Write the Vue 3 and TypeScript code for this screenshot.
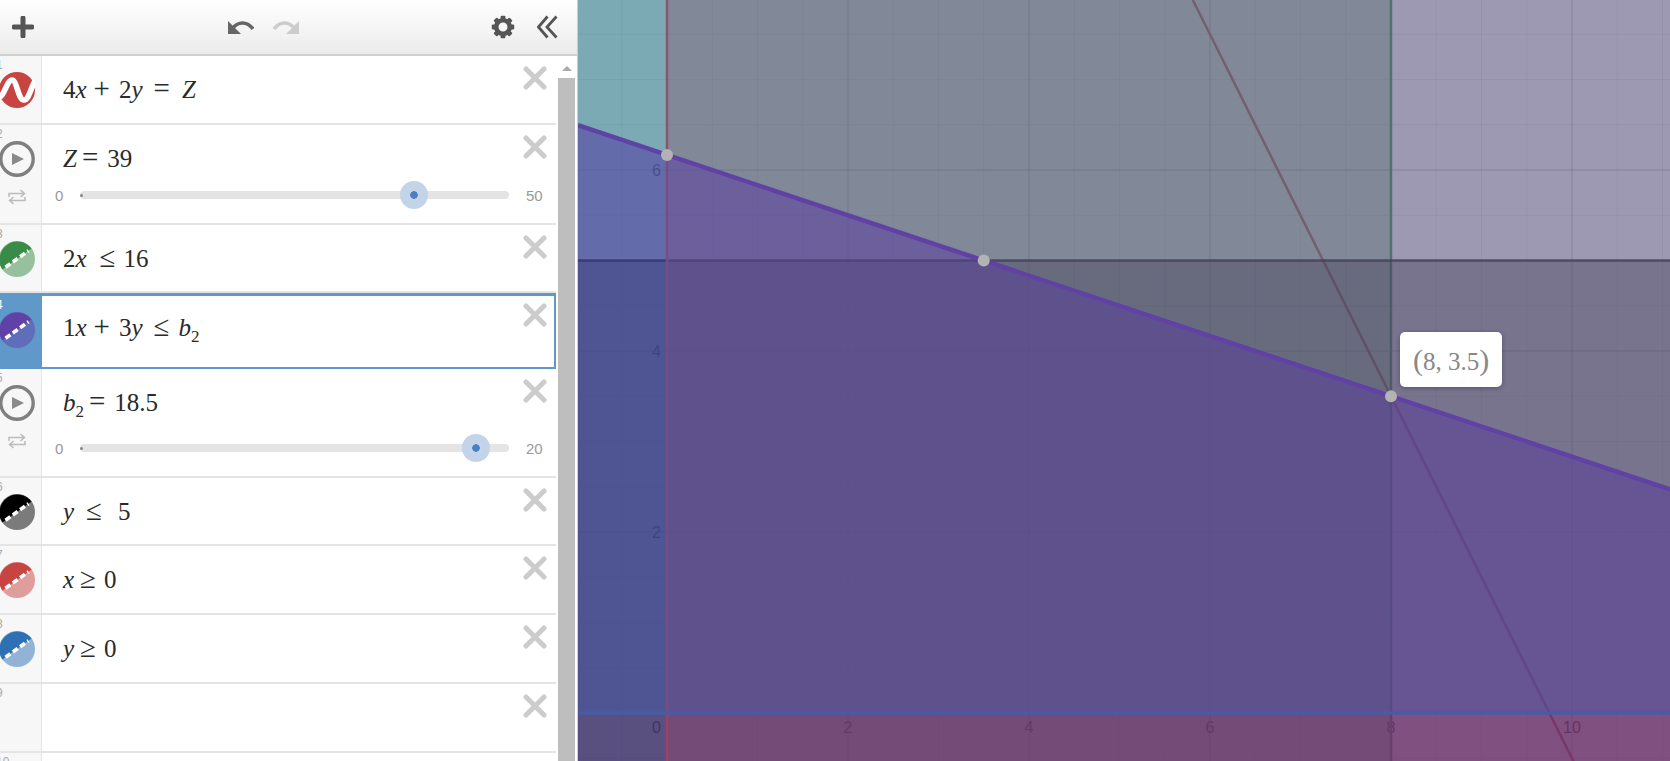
<template>
  <div class="app">
    <aside class="panel">
      <header class="toolbar">
        <svg class="plus" width="22" height="22" viewBox="0 0 22 22">
          <path d="M11 2v18M2 11h18" stroke="#555" stroke-width="5" stroke-linecap="round" />
        </svg>
        <svg class="undo" width="26" height="15" viewBox="0 0 26 15">
          <path d="M0 1 L0 14 L13 14 Z" fill="#666" />
          <path d="M4 9 C10 1 19 1 25 9" fill="none" stroke="#666" stroke-width="3.6" />
        </svg>
        <svg class="redo" width="26" height="15" viewBox="0 0 26 15">
          <path d="M26 1 L26 14 L13 14 Z" fill="#ccc" />
          <path d="M22 9 C16 1 7 1 1 9" fill="none" stroke="#ccc" stroke-width="3.6" />
        </svg>
        <svg class="gear" width="24" height="24" viewBox="0 0 24 24">
          <circle cx="12" cy="12" r="6.8" fill="none" stroke="#555" stroke-width="4.6" />
          <rect
            v-for="a in gearTeeth"
            :key="a"
            x="9.6"
            y="0.8"
            width="4.8"
            height="5"
            rx="1"
            fill="#555"
            :transform="`rotate(${a} 12 12)`"
          />
        </svg>
        <svg class="collapse" width="21" height="24" viewBox="0 0 21 24">
          <path d="M10.5 1.5 L1.5 12 L10.5 22.5 M19.5 1.5 L10 12 L19.5 22.5" fill="none" stroke="#555" stroke-width="2.8" />
        </svg>
      </header>

      <div class="body">
        <div class="list">
          <div
            v-for="(row, i) in rows"
            :key="i"
            class="row"
            :class="[row.size, { selected: row.selected }]"
          >
            <div class="gutter">
              <span class="index">{{ i + 1 }}</span>

              <svg v-if="row.icon === 'wave'" class="icon" width="36" height="36" viewBox="0 0 36 36">
                <circle cx="18" cy="18" r="18" fill="#c74440" />
                <path
                  d="M0 25 C5 25 8 8 13 8 C18 8 19 28 25 28 C30 28 32 15 36 9"
                  fill="none"
                  stroke="#fff"
                  stroke-width="5.6"
                />
              </svg>

              <template v-else-if="row.icon === 'play'">
                <svg class="icon" width="36" height="36" viewBox="0 0 36 36">
                  <circle cx="18" cy="18" r="16.2" fill="none" stroke="#7f7f7f" stroke-width="3.4" />
                  <path d="M13 12 L25 18 L13 24 Z" fill="#8a8a8a" />
                </svg>
                <svg class="loop" width="18" height="16" viewBox="0 0 18 16">
                  <path
                    d="M1 8 V4.5 H16 M12.5 1 L16.5 4.5 L12.5 8 M17 8 V11.5 H2 M5.5 8 L1.5 11.5 L5.5 15"
                    fill="none"
                    stroke="#bbb"
                    stroke-width="1.5"
                  />
                </svg>
              </template>

              <svg v-else-if="row.color" class="icon" width="36" height="36" viewBox="0 0 36 36">
                <circle cx="18" cy="18" r="18" :fill="row.color" fill-opacity="0.5" />
                <path d="M3.4 28.5 A18 18 0 0 1 32.6 7.5 Z" :fill="row.color" />
                <path d="M6.5 26.3 L29.5 9.7" stroke="#fff" stroke-width="3.6" stroke-dasharray="6 3" />
              </svg>
            </div>

            <div class="content">
              <div class="math">
                <span v-for="(tok, j) in row.math" :key="j" :class="tok.c">{{ tok.t }}</span>
              </div>

              <div v-if="row.slider" class="slider">
                <span class="bound">{{ row.slider.min }}</span>
                <div class="track">
                  <span class="cap"></span>
                  <span class="thumb" :style="{ left: thumbLeft(row.slider) }"></span>
                </div>
                <span class="bound">{{ row.slider.max }}</span>
              </div>
            </div>

            <svg class="close" width="24" height="24" viewBox="0 0 24 24">
              <path d="M3 3 L21 21 M21 3 L3 21" stroke="#ccc" stroke-width="5" stroke-linecap="round" />
            </svg>
          </div>
        </div>

        <div class="scrollbar">
          <div class="arrow"></div>
          <div class="scroll-thumb"></div>
        </div>
      </div>
    </aside>

    <main class="graph">
      <svg class="plot" width="1092" height="761" viewBox="578 0 1092 761">
        <rect x="578" y="0" width="1092" height="761" fill="#fff" />

        <line v-for="x in minorX" :key="'mx' + x" :x1="x" :x2="x" y1="0" y2="761" class="minor" />
        <line v-for="y in minorY" :key="'my' + y" :y1="y" :y2="y" x1="578" x2="1670" class="minor" />
        <line v-for="x in majorX" :key="'jx' + x" :x1="x" :x2="x" y1="0" y2="761" class="major" />
        <line v-for="y in majorY" :key="'jy' + y" :y1="y" :y2="y" x1="578" x2="1670" class="major" />

        <text v-for="l in labelsX" :key="'lx' + l.v" :x="l.x" y="733" class="tick">{{ l.v }}</text>
        <text v-for="l in labelsY" :key="'ly' + l.v" x="661" :y="l.y" class="tick end">{{ l.v }}</text>
        <text x="661" y="733" class="tick end">0</text>

        <line :x1="px(5.81)" y1="0" :x2="px(10.75)" :y2="py(-2)" stroke="#c74440" stroke-width="2.5" />

        <rect x="578" y="0" :width="px(8) - 578" height="761" fill="#388c46" fill-opacity="0.4" />
        <line :x1="px(8)" :x2="px(8)" y1="0" y2="761" stroke="#388c46" stroke-width="2.5" />

        <polygon :points="purpleRegion" fill="#6042a6" fill-opacity="0.4" />

        <rect x="578" :y="py(5)" width="1092" :height="761 - py(5)" fill="#000" fill-opacity="0.4" />
        <line x1="578" x2="1670" :y1="py(5)" :y2="py(5)" stroke="#000" stroke-opacity="0.8" stroke-width="2.5" />

        <rect :x="px(0)" y="0" :width="1670 - px(0)" height="761" fill="#c74440" fill-opacity="0.4" />
        <line :x1="px(0)" :x2="px(0)" y1="0" y2="761" stroke="#c74440" stroke-width="2.5" />

        <rect x="578" y="0" width="1092" :height="py(0)" fill="#2d70b3" fill-opacity="0.4" />
        <line x1="578" x2="1670" :y1="py(0)" :y2="py(0)" stroke="#2d70b3" stroke-width="3" />

        <!-- selected expression is painted again on top -->
        <polygon :points="purpleRegion" fill="#6042a6" fill-opacity="0.4" />
        <line x1="578" :y1="lineY(578)" x2="1670" :y2="lineY(1670)" stroke="#6042a6" stroke-width="4.5" />

        <circle v-for="p in points" :key="p.x" :cx="px(p.x)" :cy="py(p.y)" r="6" fill="#b3b3b3" />
      </svg>

      <div class="tooltip"><span class="paren">(</span>8, 3.5<span class="paren">)</span></div>
    </main>
  </div>
</template>

<script setup lang="ts">
interface Token {
  t: string;
  c: string;
}

interface SliderInfo {
  min: number;
  max: number;
  value: number;
}

interface Row {
  size: string;
  icon?: 'wave' | 'play';
  color?: string;
  selected?: boolean;
  math: Token[];
  slider?: SliderInfo;
}

const num = (t: string): Token => ({ t, c: 'num' });
const v = (t: string): Token => ({ t, c: 'var' });
const op = (t: string, c: string): Token => ({ t, c });

const rows: Row[] = [
  {
    size: 'h69',
    icon: 'wave',
    math: [num('4'), v('x'), op('+', 'sym bin'), num('2'), v('y'), op('=', 'sym rel-e'), v('Z')]
  },
  {
    size: 'h100',
    icon: 'play',
    math: [v('Z'), op('=', 'sym eq'), num('39')],
    slider: { min: 0, max: 50, value: 39 }
  },
  {
    size: 'h68',
    color: '#388c46',
    math: [num('2'), v('x'), op('≤', 'sym rel-l'), num('16')]
  },
  {
    size: 'h76',
    color: '#6042a6',
    selected: true,
    math: [num('1'), v('x'), op('+', 'sym bin'), num('3'), v('y'), op('≤', 'sym rel-l2'), v('b'), op('2', 'sub')]
  },
  {
    size: 'h109',
    icon: 'play',
    math: [v('b'), op('2', 'sub'), op('=', 'sym eq'), num('18.5')],
    slider: { min: 0, max: 20, value: 18.5 }
  },
  {
    size: 'h68',
    color: '#000000',
    math: [v('y'), op('≤', 'sym rel-w'), num('5')]
  },
  {
    size: 'h69',
    color: '#c74440',
    math: [v('x'), op('≥', 'sym rel'), num('0')]
  },
  {
    size: 'h69',
    color: '#2d70b3',
    math: [v('y'), op('≥', 'sym rel'), num('0')]
  },
  { size: 'h69', math: [] },
  { size: 'h69', math: [] }
];

const gearTeeth = [0, 45, 90, 135, 180, 225, 270, 315];

const thumbLeft = (s: SliderInfo) => `${((s.value - s.min) / (s.max - s.min)) * 100}%`;

// graph scale, page pixels
const originX = 667;
const originY = 713;
const unit = 90.5;

const px = (x: number) => originX + x * unit;
const py = (y: number) => originY - y * unit;
const lineY = (pageX: number) => py((18.5 - (pageX - originX) / unit) / 3);

const range = (from: number, to: number, step: number) => {
  const out: number[] = [];
  for (let n = from; n <= to; n += step) out.push(n);
  return out;
};

const minorX = range(-0.5, 11, 0.5).map(px);
const minorY = range(-0.5, 8, 0.5).map(py);
const majorX = range(2, 10, 2).map(px);
const majorY = range(2, 6, 2).map(py);

const labelsX = [2, 4, 6, 8, 10].map((n) => ({ v: n, x: px(n) }));
const labelsY = [2, 4, 6].map((n) => ({ v: n, y: py(n) + 6 }));

const purpleRegion = `578,${lineY(578)} 1670,${lineY(1670)} 1670,761 578,761`;

const points = [
  { x: 0, y: 18.5 / 3 },
  { x: 3.5, y: 5 },
  { x: 8, y: 3.5 }
];
</script>

<style scoped>
.app {
  display: flex;
  width: 1670px;
  height: 761px;
  overflow: hidden;
  font-family: "Liberation Sans", Arial, sans-serif;
}

.panel {
  display: flex;
  flex-direction: column;
  flex: none;
  width: 578px;
  height: 761px;
  background: #fff;
  border-right: 1px solid #ccc;
  box-sizing: border-box;
}

.toolbar {
  display: flex;
  align-items: center;
  flex: none;
  height: 56px;
  padding-right: 19px;
  box-sizing: border-box;
  background: linear-gradient(#fff, #ebebeb);
  border-bottom: 2px solid #d0d0d0;
}

.plus {
  margin-left: 12px;
}

.undo {
  margin-left: 194px;
}

.redo {
  margin-left: 19px;
}

.gear {
  margin-left: auto;
}

.collapse {
  margin-left: 22px;
}

.body {
  display: flex;
  flex: 1;
  min-height: 0;
}

.list {
  flex: none;
  width: 556px;
}

.row {
  display: flex;
  position: relative;
  box-sizing: border-box;
  border-bottom: 2px solid #e4e4e4;
}

.h68 { height: 68px; }
.h69 { height: 69px; }
.h76 { height: 76px; }
.h100 { height: 100px; }
.h109 { height: 109px; }

.gutter {
  display: flex;
  flex-direction: column;
  position: relative;
  flex: none;
  width: 42px;
  padding-top: 16px;
  box-sizing: border-box;
  background: #f7f7f7;
  border-right: 1px solid #e6e6e6;
}

.index {
  position: absolute;
  left: -4px;
  top: 2px;
  font-size: 12px;
  color: #aaa;
}

.icon {
  flex: none;
  margin-left: -1px;
}

.loop {
  flex: none;
  margin: 12px 0 0 8px;
}

.content {
  display: flex;
  flex-direction: column;
  justify-content: space-between;
  flex: 1;
  min-width: 0;
  padding: 17px 0 0 21px;
}

.math {
  height: 34px;
  line-height: 34px;
  font-family: "Liberation Serif", "Times New Roman", serif;
  font-size: 25px;
  color: #2a2a2a;
  white-space: nowrap;
}

.var { font-style: italic; }
.sym { font-size: 29px; line-height: 0; }
.bin { margin: 0 9px 0 7px; }
.eq { margin: 0 9px 0 5px; }
.rel { margin: 0 8px 0 6px; }
.rel-e { margin: 0 12px 0 11px; }
.rel-l { margin: 0 8px 0 13px; }
.rel-l2 { margin: 0 9px 0 11px; }
.rel-w { margin: 0 16px 0 12px; }

.sub {
  font-size: 17px;
  line-height: 0;
  vertical-align: -6px;
}

.slider {
  display: flex;
  align-items: center;
  height: 28px;
  margin: 0 0 14px -8px;
}

.bound {
  flex: none;
  font-size: 15px;
  color: #999;
}

.bound:first-child {
  width: 25px;
}

.track {
  position: relative;
  flex: none;
  width: 429px;
  height: 8px;
  margin-right: 17px;
  border-radius: 4px;
  background: #e4e4e4;
}

.cap {
  position: absolute;
  left: 0;
  top: 2.5px;
  width: 3px;
  height: 3px;
  border-radius: 50%;
  background: #888;
}

.thumb {
  position: absolute;
  top: 50%;
  width: 28px;
  height: 28px;
  margin: -14px 0 0 -15px;
  border-radius: 50%;
  background: radial-gradient(circle, #4a80c0 0 3.5px, #c3d4e9 4px);
}

.close {
  position: absolute;
  right: 9px;
  top: 10px;
}

.selected {
  border-top: 3px solid #6098ca;
  border-right: 2px solid #6098ca;
  border-bottom: 2px solid #6098ca;
}

.selected .gutter {
  margin-top: -3px;
  margin-bottom: -2px;
  padding-top: 19px;
  background: #6098ca;
  border-right: 0;
}

.selected .index {
  top: 5px;
  color: #fff;
}

.selected .content {
  padding-top: 15px;
}

.selected .close {
  right: 7px;
  top: 7px;
}

.scrollbar {
  display: flex;
  flex-direction: column;
  flex: none;
  width: 21px;
  padding: 0 2px;
  box-sizing: border-box;
}

.arrow {
  flex: none;
  width: 0;
  height: 0;
  margin: 10px auto 7px;
  border-left: 5px solid transparent;
  border-right: 5px solid transparent;
  border-bottom: 5px solid #aaa;
}

.scroll-thumb {
  flex: 1;
  background: #bebebe;
}

.graph {
  position: relative;
  flex: none;
  width: 1092px;
  height: 761px;
}

.plot {
  display: block;
}

.minor {
  stroke: rgba(0, 0, 0, 0.08);
  stroke-width: 1;
}

.major {
  stroke: rgba(0, 0, 0, 0.2);
  stroke-width: 1;
}

.tick {
  font-family: "Liberation Sans", Arial, sans-serif;
  font-size: 16px;
  fill: #222;
  text-anchor: middle;
}

.tick.end {
  text-anchor: end;
}

.tooltip {
  position: absolute;
  left: 822px;
  top: 332px;
  width: 102px;
  height: 55px;
  border-radius: 5px;
  background: #fff;
  box-shadow: 0 1px 5px rgba(0, 0, 0, 0.3);
  font-family: "Liberation Serif", "Times New Roman", serif;
  font-size: 25px;
  line-height: 55px;
  text-align: center;
  color: #888;
}

.paren {
  font-size: 30px;
  font-weight: 400;
}
</style>
